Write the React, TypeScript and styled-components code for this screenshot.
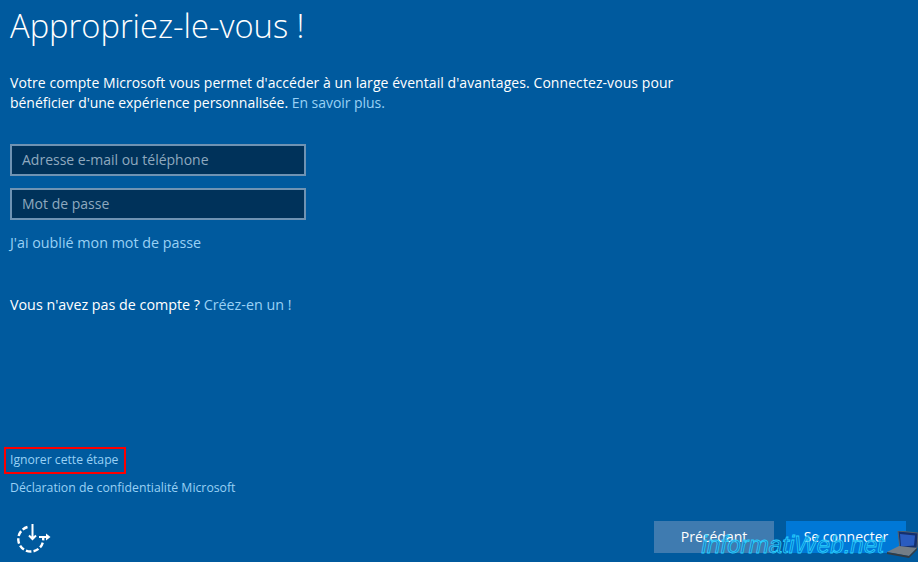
import React from 'react'
import styled, { createGlobalStyle } from 'styled-components'

const GlobalStyle = createGlobalStyle`
  html, body {
    margin: 0;
    padding: 0;
    background: #005a9e;
  }
`

const SetupIcon = () => (
  <SetupSvg width="36" height="32" viewBox="0 0 36 32" fill="none" stroke="#fff">
    <path d="M12.5 6a12.5 12.5 0 1 0 15.5 9.5" strokeWidth="2.4" strokeDasharray="5.5 2.2" />
    <path d="M17.5 3v15M14 14.5l3.5 3.5 3.5-3.5" strokeWidth="2" />
    <path d="M24 16h10" strokeWidth="2" />
    <path d="M31 12.5l4.5 3.5-4.5 3.5z" fill="#fff" stroke="none" />
  </SetupSvg>
)

const LaptopIcon = () => (
  <svg width="31" height="27" viewBox="0 0 31 27">
    <path d="M11 0l20 2-1 15-17 1z" fill="#14306f" stroke="#56616b" />
    <path d="M13 3l15 1.500-1 10-13 1z" fill="#2a5cc0" />
    <path d="M0 21l12-6 18 2-8 8z" fill="#747e87" />
    <path d="M0 21l22 4 8-8v2l-8 8-22-4z" fill="#343c43" />
  </svg>
)

export default function App() {
  return (
    <Page>
      <GlobalStyle />
      <Title>Appropriez-le-vous !</Title>
      <Intro>
        <IntroLine $spacing={0.07}>
          Votre compte Microsoft vous permet d'accéder à un large éventail d'avantages. Connectez-vous pour
        </IntroLine>
        <IntroLine $spacing={-0.04}>
          bénéficier d'une expérience personnalisée. <Link>En savoir plus.</Link>
        </IntroLine>
      </Intro>
      <Fields>
        <Field>Adresse e-mail ou téléphone</Field>
        <Field>Mot de passe</Field>
      </Fields>
      <Forgot>J'ai oublié mon mot de passe</Forgot>
      <NoAccount>
        Vous n'avez pas de compte ? <Link>Créez-en un !</Link>
      </NoAccount>
      <Spacer />
      <SkipLink>Ignorer cette étape</SkipLink>
      <Privacy>Déclaration de confidentialité Microsoft</Privacy>
      <Footer>
        <SetupIcon />
        <Buttons>
          <Button>Précédant</Button>
          <Button $primary>Se connecter</Button>
        </Buttons>
      </Footer>
      <Watermark>
        <WatermarkText>informatiWeb.net</WatermarkText>
        <LaptopIcon />
      </Watermark>
    </Page>
  )
}

const Page = styled.main`
  position: relative;
  display: flex;
  flex-direction: column;
  box-sizing: border-box;
  width: 918px;
  height: 562px;
  padding: 0 12px 9px 10px;
  overflow: hidden;
  background: #005a9e;
  color: #fff;
  font-family: 'Open Sans', 'Noto Sans', sans-serif;
  font-size: 14px;
`

const Title = styled.h1`
  margin: 0;
  font-size: 32.7px;
  line-height: 52px;
  font-weight: 300;
`

const Intro = styled.div`
  margin: 21px 0 0;
  font-size: 14px;
  line-height: 20px;
`

const IntroLine = styled.div<{ $spacing: number }>`
  letter-spacing: ${p => p.$spacing}px;
  white-space: nowrap;
`

const Link = styled.span`
  color: #99d1f5;
`

const Fields = styled.div`
  display: flex;
  flex-direction: column;
  gap: 12px;
  margin-top: 31px;
`

const Field = styled.div`
  box-sizing: border-box;
  width: 296px;
  height: 32px;
  padding: 0 10px;
  border: 2px solid #6f93b3;
  background: #00325a;
  color: #8fa9bf;
  font-size: 14px;
  line-height: 28px;
`

const Forgot = styled(Link)`
  margin-top: 13px;
  font-size: 14.3px;
  line-height: 20px;
`

const NoAccount = styled.p`
  margin: 42px 0 0;
  font-size: 14.3px;
  line-height: 20px;
`

const Spacer = styled.div`
  flex: 1;
`

const SkipLink = styled.div`
  position: relative;
  color: #99d1f5;
  font-size: 12.2px;
  line-height: 18px;

  &::after {
    content: '';
    position: absolute;
    left: -6px;
    top: -4px;
    width: 122px;
    height: 27px;
    box-sizing: border-box;
    border: 2px solid #f00;
  }
`

const Privacy = styled.div`
  margin-top: 10px;
  color: #99d1f5;
  font-size: 12.27px;
  line-height: 18px;
`

const Footer = styled.div`
  display: flex;
  align-items: flex-end;
  justify-content: space-between;
  margin-top: 24px;
`

const SetupSvg = styled.svg`
  margin-left: 5px;
`

const Buttons = styled.div`
  display: flex;
  gap: 12px;
`

const Button = styled.div<{ $primary?: boolean }>`
  width: 120px;
  height: 32px;
  background: ${p => (p.$primary ? '#0078d7' : '#3f7bb0')};
  color: #fff;
  font-size: 14px;
  line-height: 32px;
  text-align: center;
`

const Watermark = styled.div`
  position: absolute;
  right: 0;
  bottom: 4px;
  display: flex;
  align-items: flex-end;
`

const WatermarkText = styled.span`
  margin-right: 3px;
  color: rgba(10, 120, 200, 0.6);
  font-family: 'Liberation Sans', sans-serif;
  font-style: italic;
  font-size: 24.2px;
  line-height: 26px;
  -webkit-text-stroke: 0.8px #2ad0ff;
`
